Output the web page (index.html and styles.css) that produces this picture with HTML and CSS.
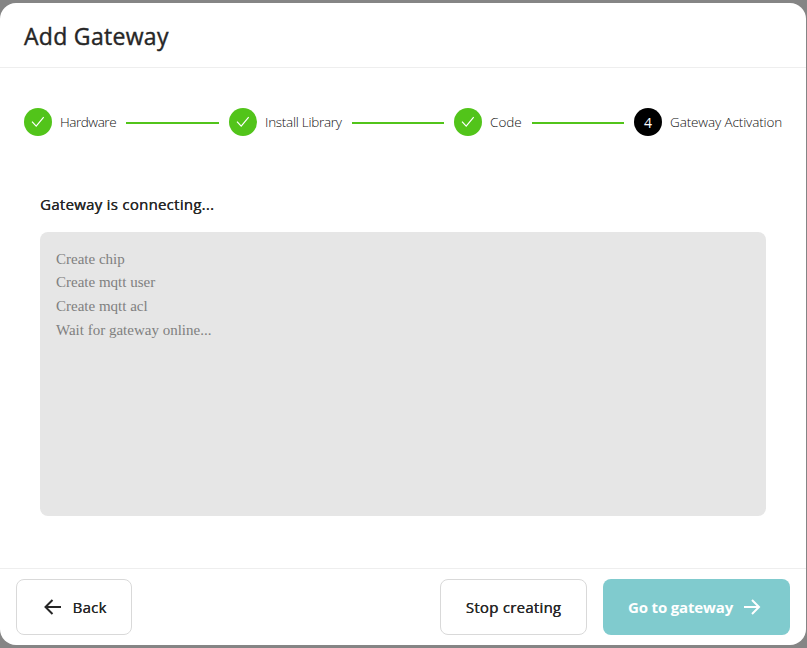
FILE: index.html
```html
<!DOCTYPE html>
<html lang="en">
<head>
<meta charset="utf-8">
<title>Add Gateway</title>
<link rel="stylesheet" href="styles.css">
</head>
<body>
<main class="modal">
  <header class="modal-header"><h1>Add Gateway</h1></header>
  <section class="modal-body">
    <ol class="steps">
      <li class="step done">
        <span class="step-icon"><svg viewBox="0 0 14 12"><path d="M1 5.7 5.2 10.2 12.7 1.2"/></svg></span>
        <span class="step-title hardware">Hardware</span><span class="step-line"></span>
      </li>
      <li class="step done">
        <span class="step-icon"><svg viewBox="0 0 14 12"><path d="M1 5.7 5.2 10.2 12.7 1.2"/></svg></span>
        <span class="step-title library">Install Library</span><span class="step-line"></span>
      </li>
      <li class="step done">
        <span class="step-icon"><svg viewBox="0 0 14 12"><path d="M1 5.7 5.2 10.2 12.7 1.2"/></svg></span>
        <span class="step-title code">Code</span><span class="step-line"></span>
      </li>
      <li class="step current">
        <span class="step-icon">4</span>
        <span class="step-title activation">Gateway Activation</span>
      </li>
    </ol>
    <div class="content">
      <h2>Gateway is connecting...</h2>
      <div class="log">
        <p>Create chip</p>
        <p>Create mqtt user</p>
        <p>Create mqtt acl</p>
        <p>Wait for gateway online...</p>
      </div>
    </div>
  </section>
  <footer class="modal-footer">
    <button class="btn back"><svg viewBox="0 0 18 16"><path d="M17 8H2M8.5 1 1.5 8l7 7"/></svg><span>Back</span></button>
    <button class="btn stop"><span>Stop creating</span></button>
    <button class="btn go"><span>Go to gateway</span><svg viewBox="0 0 18 16"><path d="M1 8h15M9 1l7 7-7 7"/></svg></button>
  </footer>
</main>
</body>
</html>
```
FILE: styles.css
```css
* { box-sizing: border-box; }
body {
  margin: 0;
  height: 648px;
  padding: 3px 1px 3px 0;
  overflow: hidden;
  background: #858585;
  color: #262626;
  font-family: "Open Sans", "Noto Sans", sans-serif;
}
h1, h2, p, ol { margin: 0; padding: 0; }
.modal {
  height: 642px;
  display: flex;
  flex-direction: column;
  background: #fff;
  border-radius: 16px;
  overflow: hidden;
}
.modal-header {
  height: 65px;
  padding: 0 24px;
  display: flex;
  align-items: center;
  border-bottom: 1px solid #eee;
}
h1 {
  padding-top: 2px;
  font-size: 23px;
  font-weight: 500;
  line-height: 32px;
  letter-spacing: 0.3px;
  white-space: nowrap;
  -webkit-text-stroke: 0.4px currentColor;
}
.modal-body { flex: 1; padding-top: 40px; }
.steps { display: flex; padding: 0 24px; list-style: none; }
.step { display: flex; align-items: center; flex: none; height: 28px; }
.step-icon {
  width: 28px;
  height: 28px;
  border-radius: 50%;
  display: flex;
  align-items: center;
  justify-content: center;
  font-size: 14px;
  color: #fff;
  background: #52c41a;
}
.step-icon svg { width: 14px; height: 12px; fill: none; stroke: #fff; stroke-width: 1.2; }
.current .step-icon { background: #000; }
.step-title {
  margin-left: 8px;
  font-size: 13.5px;
  font-weight: 300;
  line-height: 28px;
  color: #111;
  white-space: nowrap;
}
.hardware { width: 57px; letter-spacing: -0.45px; }
.library { width: 78px; letter-spacing: -0.27px; }
.code { width: 33px; }
.activation { width: 112px; letter-spacing: -0.12px; }
.step-line { width: 92px; height: 2px; margin: 2px 10px 0 9px; background: #52c41a; }
.hardware + .step-line { width: 93px; }
.content { padding: 56px 40px 0; }
h2 {
  height: 24px;
  margin-bottom: 16px;
  font-size: 15px;
  font-weight: 500;
  line-height: 24px;
  letter-spacing: 0.27px;
  white-space: nowrap;
  text-shadow: 0.3px 0 0 currentColor;
}
.log {
  height: 284px;
  padding: 15.6px 16px;
  border-radius: 8px;
  background: #e6e6e6;
  color: #808080;
  font: 15px/23.7px "Liberation Serif", serif;
}
.modal-footer {
  height: 77px;
  padding: 10px 16px;
  display: flex;
  gap: 16px;
  border-top: 1px solid #eee;
}
.btn {
  height: 56px;
  padding: 0;
  display: flex;
  align-items: center;
  justify-content: center;
  gap: 11px;
  border: 1px solid #d9d9d9;
  border-radius: 8px;
  background: #fff;
  color: #262626;
  font: 500 15px/24px "Open Sans", sans-serif;
  letter-spacing: 0.25px;
  white-space: nowrap;
  text-shadow: 0.3px 0 0 currentColor;
}
.btn svg { width: 18px; height: 16px; fill: none; stroke: currentColor; stroke-width: 2; }
.back { width: 116px; margin-right: auto; padding-left: 3px; gap: 10px; }
.stop { width: 147px; }
.go {
  width: 187px;
  padding-right: 4px;
  gap: 10px;
  border: 0;
  background: #80cbce;
  color: #fff;
  font-weight: 700;
  letter-spacing: -0.15px;
  text-shadow: none;
}
```
